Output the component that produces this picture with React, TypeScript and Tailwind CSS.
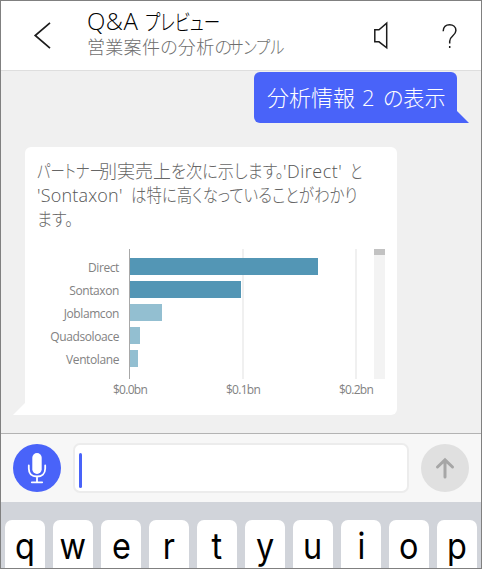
import React from 'react';

const jp = "font-['Open_Sans','Noto_Sans_CJK_JP',sans-serif] [font-feature-settings:'palt']";

const bars = [
  { name: 'Direct', width: 188, strong: true },
  { name: 'Sontaxon', width: 111, strong: true },
  { name: 'Joblamcon', width: 32, strong: false },
  { name: 'Quadsoloace', width: 10, strong: false },
  { name: 'Ventolane', width: 8, strong: false },
];

const keys = ['q', 'w', 'e', 'r', 't', 'y', 'u', 'i', 'o', 'p'];

// A run of text with its own advance width; the inner text is condensed horizontally.
function Run({ children, box, scale = '' }: { children: React.ReactNode; box: string; scale?: string }) {
  return (
    <span className={`block shrink-0 whitespace-nowrap ${box}`}>
      <span className={`block w-max origin-left ${scale}`}>{children}</span>
    </span>
  );
}

function Header() {
  return (
    <header className="flex h-[70px] shrink-0 border-b border-[#dedede] bg-white pl-[32px] text-[#1c1c1c]">
      <svg className="mt-[20px] h-[30px] w-[20px] shrink-0" viewBox="0 0 20 30" fill="none" stroke="currentColor" strokeWidth="1.7">
        <path d="M17 1.8 2.2 14.5 17 27.2" />
      </svg>
      <div className={`ml-[34px] w-[270px] pt-[6px] ${jp}`}>
        <h1 className="flex text-[22px] leading-[28px] font-light">
          <Run box="w-[58px] text-[24px] tracking-[0.5px] text-black">Q&amp;A</Run>
          <Run box="w-[74px] text-black" scale="scale-x-[0.75]">プレビュー</Run>
        </h1>
        <p className="flex text-[18px] leading-[24px] font-light text-[#6e6e6e]">
          <Run box="w-[142px] tracking-[0.3px]">営業案件の分析の</Run>
          <Run box="w-[56px]" scale="scale-x-[0.84]">サンプル</Run>
        </p>
      </div>
      <svg className="mt-[20px] ml-[15px] h-[30px] w-[20px] shrink-0" viewBox="0 0 20 30" fill="none" stroke="currentColor" strokeWidth="1.5">
        <path d="M2.8 8.8H7L14.7 2.2V26.8L7 20.8H2.8Z" />
      </svg>
      <svg className="mt-[20px] ml-[50px] h-[30px] w-[20px] shrink-0" viewBox="0 0 20 30" fill="none" stroke="currentColor" strokeWidth="1.5">
        <path d="M1.2 10.2C1.2 6 4 3.7 7.6 3.7C11.2 3.7 13.9 5.9 13.9 9.5C13.9 14.8 7.7 14.8 7.7 20.3V22.5" />
        <path d="M7.7 25V27" />
      </svg>
    </header>
  );
}

function Chart() {
  return (
    <div className="mt-[18px] font-['Open_Sans',sans-serif] text-[12px] text-[#828282]">
      <div className="flex h-[130px]">
        <div className="flex w-[94px] flex-col gap-[6px] pt-[10px] text-right leading-[17px]">
          {bars.map((b) => (
            <span key={b.name} className="h-[17px] tracking-[-0.4px]">{b.name}</span>
          ))}
        </div>
        <div className="relative ml-[10px] w-[228px] border-l border-[#a8a8a8]">
          <i className="absolute top-0 left-[112px] h-full w-[2px] bg-[#f0f0f0]" />
          <i className="absolute top-0 left-[225px] h-full w-[2px] bg-[#f0f0f0]" />
          <div className="relative flex flex-col gap-[6px] pt-[9px]">
            {bars.map((b) => (
              <div
                key={b.name}
                className={`h-[17px] ${b.strong ? 'bg-[#5396b5]' : 'bg-[#93bfd1]'}`}
                style={{ width: b.width }}
              />
            ))}
          </div>
        </div>
        <div className="ml-[17px] w-[11px] bg-[#f3f3f3]">
          <div className="h-[6px] bg-[#c2c2c2]" />
        </div>
      </div>
      <div className="ml-[80px] flex gap-[63px] pt-[2px] text-center leading-[18px] tracking-[-0.7px]">
        <span className="w-[50px]">$0.0bn</span>
        <span className="w-[50px]">$0.1bn</span>
        <span className="w-[50px]">$0.2bn</span>
      </div>
    </div>
  );
}

function Chat() {
  return (
    <main className="flex h-[362px] shrink-0 flex-col bg-[#f0f0f0]">
      <div className={`relative mt-px mr-[24px] flex h-[51px] w-[203px] self-end rounded-[6px] rounded-br-none bg-[#4963f9] pl-[13px] text-[22px] leading-[50px] font-light text-white ${jp}`}>
        <Run box="w-[95px]">分析情報</Run>
        <Run box="w-[21px] text-[22px]">2</Run>
        <Run box="w-[62px]" scale="scale-x-[0.96]">の表示</Run>
        <svg className="absolute right-[-12px] bottom-0 h-[12px] w-[12px]" viewBox="0 0 12 12" fill="#4963f9">
          <path d="M0 0 12 12H0Z" />
        </svg>
      </div>
      <div className="relative mt-[24px] ml-[24px] h-[268px] w-[372px] rounded-[6px] rounded-bl-none bg-white">
        <div className={`pt-[12px] pl-[12px] text-[18px] leading-[24px] font-light text-[#666] ${jp}`}>
          <p className="flex">
            <Run box="w-[62px]" scale="scale-x-[0.8]">パートナー</Run>
            <Run box="w-[72px]">別実売上</Run>
            <Run box="w-[112px]" scale="scale-x-[0.9]">を次に示します。</Run>
            <Run box="w-[67px] tracking-[0.5px] text-[#555]">'Direct'</Run>
            <Run box="w-[14px]" scale="scale-x-[0.78]">と</Run>
          </p>
          <p className="flex">
            <Run box="w-[94px] tracking-[0.2px] text-[#555]">'Sontaxon'</Run>
            <Run box="w-[228px]" scale="scale-x-[0.857]">は特に高くなっていることがわかり</Run>
          </p>
          <p className="flex">
            <Run box="w-[40px]" scale="scale-x-[0.9]">ます。</Run>
          </p>
        </div>
        <Chart />
        <svg className="absolute bottom-0 left-[-12px] h-[12px] w-[12px]" viewBox="0 0 12 12" fill="white">
          <path d="M12 0V12H0Z" />
        </svg>
      </div>
    </main>
  );
}

function Composer() {
  return (
    <section className="flex h-[69px] shrink-0 items-center border-t border-[#b3b3b3] bg-[#f7f7f7] pl-[12px]">
      <div className="flex size-[48px] items-center justify-center rounded-full bg-[#4963f9]">
        <svg className="h-[32px] w-[20px]" viewBox="0 0 20 32" fill="none" stroke="white" strokeWidth="1.8" strokeLinecap="round">
          <rect x="5.3" y="1" width="9.4" height="21" rx="4.7" fill="white" stroke="none" />
          <path d="M1.8 13.5V16.5C1.8 21.8 5.2 24.5 10 24.5S18.2 21.8 18.2 16.5V13.5M10 24.5V30M4.8 30.3H15.2" />
        </svg>
      </div>
      <div className="ml-[12px] flex h-[50px] w-[336px] items-center rounded-[7px] border-2 border-[#ececec] bg-white pl-[4px]">
        <i className="mt-[4px] h-[35px] w-[3px] rounded-full bg-[#4963f9]" />
      </div>
      <div className="ml-[12px] flex size-[48px] items-center justify-center rounded-full bg-[#e0e0e0]">
        <svg className="h-[22px] w-[20px]" viewBox="0 0 20 22" fill="none" stroke="#a6a6a6" strokeWidth="3" strokeLinecap="round" strokeLinejoin="miter">
          <path d="M10 3V20M2.5 10 10 2.8 17.5 10" />
        </svg>
      </div>
    </section>
  );
}

function Keyboard() {
  return (
    <section className="flex flex-1 gap-[8px] overflow-hidden bg-[#d1d4da] pt-[18px] pl-[4px]">
      {keys.map((k) => (
        <div key={k} className="h-[60px] w-[40px] shrink-0 rounded-[7px] bg-white text-center font-['Inter',sans-serif] text-[36px] leading-[53px] text-black">
          <span className="inline-block scale-x-[0.9]">{k}</span>
        </div>
      ))}
    </section>
  );
}

export default function App() {
  return (
    <div className="flex h-[569px] w-[482px] flex-col overflow-hidden border border-[#808080] bg-white">
      <Header />
      <Chat />
      <Composer />
      <Keyboard />
    </div>
  );
}
